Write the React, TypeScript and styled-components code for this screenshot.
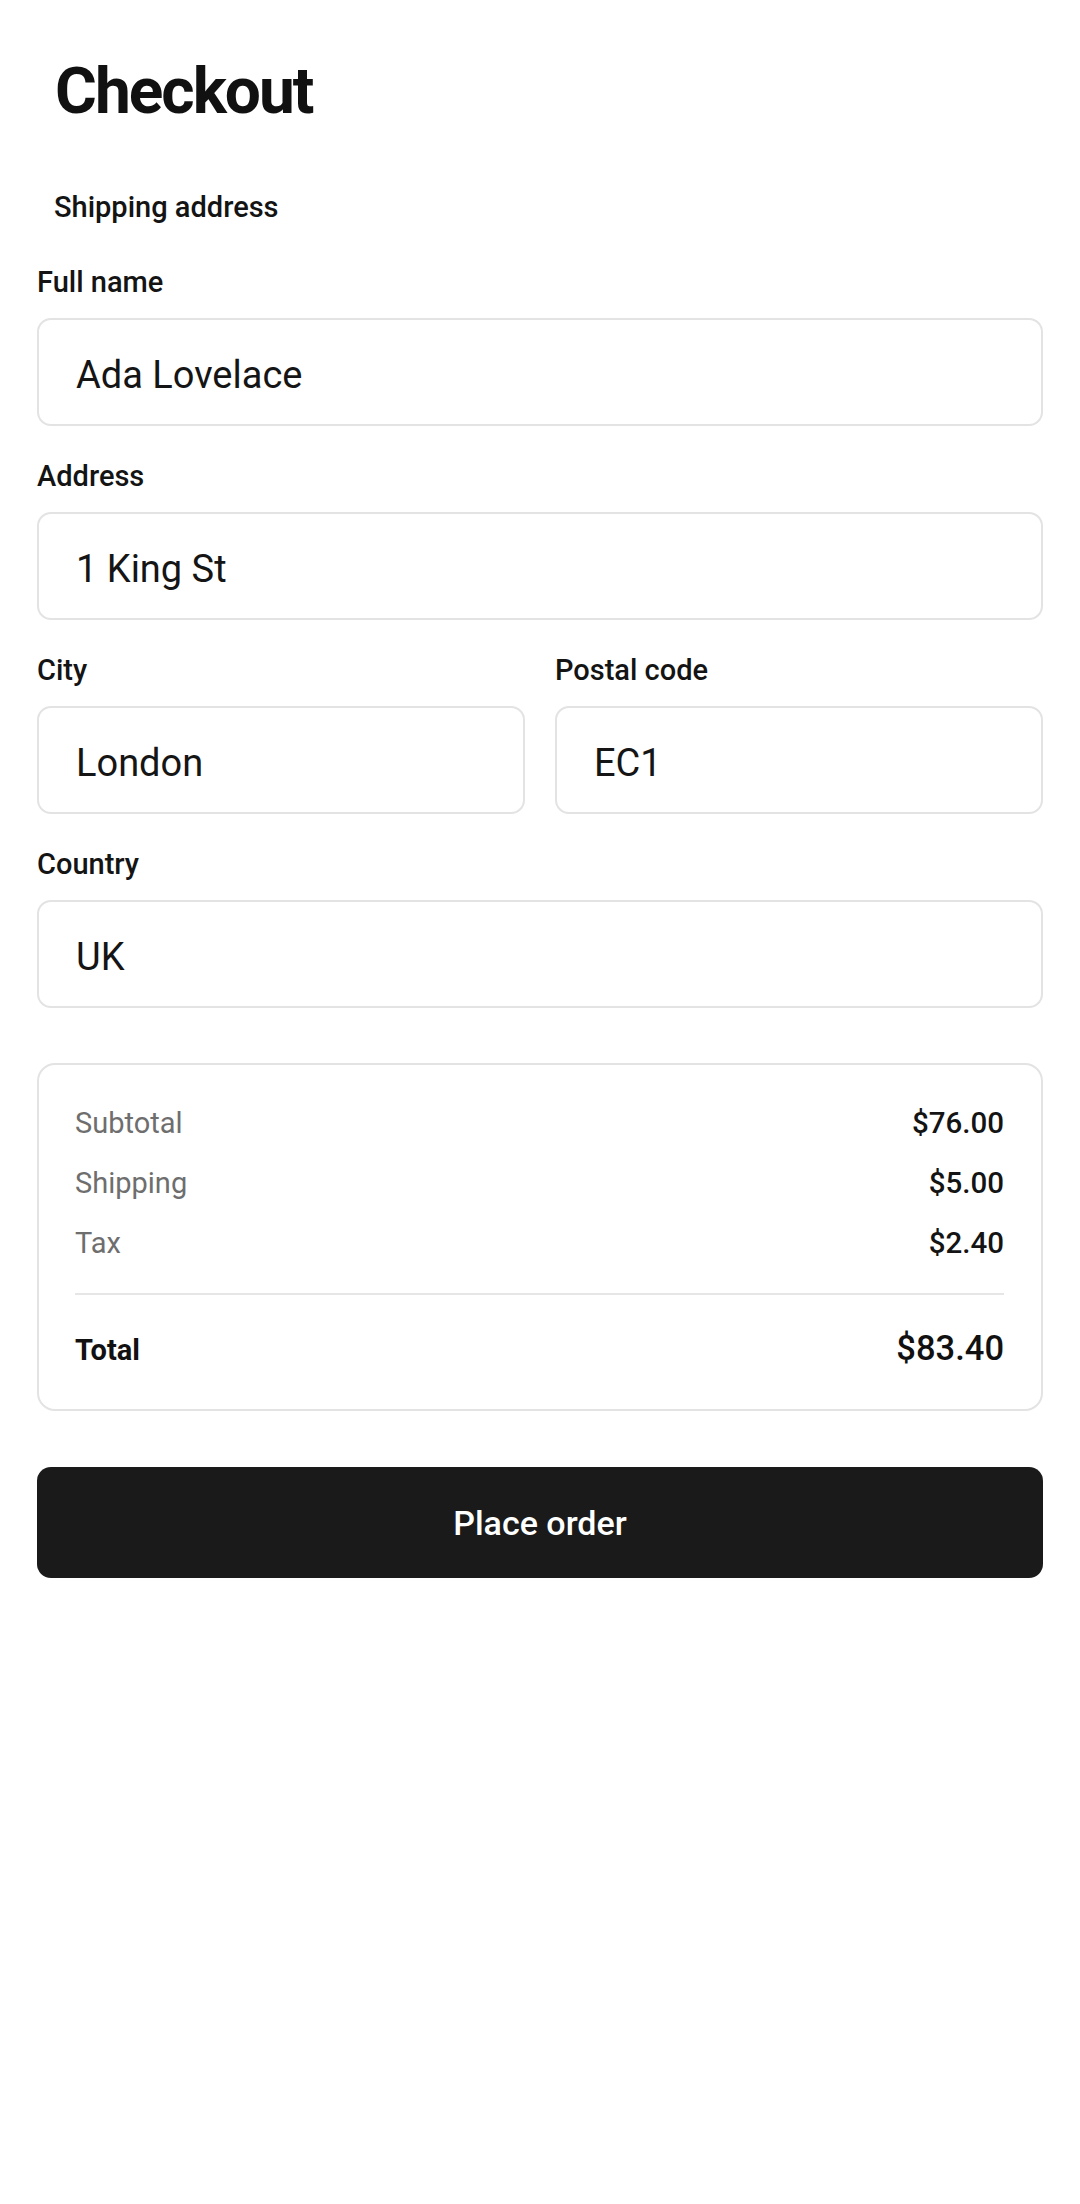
import React from "react";
import styled, { createGlobalStyle } from "styled-components";

const GlobalStyle = createGlobalStyle`
  html, body {
    margin: 0;
    padding: 0;
    background: #ffffff;
  }
  body {
    font-family: Roboto, "Noto Sans", "Liberation Sans", sans-serif;
    color: #111111;
    -webkit-font-smoothing: antialiased;
  }
  * { box-sizing: border-box; }
`;

const Page = styled.main`
  width: 1080px;
  min-height: 2204px;
  padding: 52px 37px 0 37px;
  display: flex;
  flex-direction: column;
  background: #ffffff;
`;

const Title = styled.h1`
  margin: 0 0 0 18px;
  font-size: 64px;
  line-height: 80px;
  font-weight: 700;
  letter-spacing: -2px;
  color: #111111;
`;

const SectionTitle = styled.h2`
  margin: 58px 0 40px 17px;
  font-size: 29px;
  line-height: 34px;
  font-weight: 500;
  color: #141414;
`;

const Form = styled.form`
  display: flex;
  flex-direction: column;
  gap: 32px;
`;

const Row = styled.div`
  display: grid;
  grid-template-columns: 1fr 1fr;
  gap: 30px;
`;

const Field = styled.label`
  display: flex;
  flex-direction: column;
  gap: 18px;
`;

const LabelText = styled.span`
  font-size: 29px;
  line-height: 36px;
  font-weight: 500;
  color: #141414;
`;

const Input = styled.input`
  height: 108px;
  width: 100%;
  padding: 5px 37px 0 37px;
  border: 2px solid #e3e3e3;
  border-radius: 14px;
  background: #ffffff;
  font-family: Roboto, "Noto Sans", "Liberation Sans", sans-serif;
  font-size: 38px;
  font-weight: 400;
  color: #151515;
  outline: none;
`;

const Summary = styled.section`
  margin-top: 55px;
  border: 2px solid #e3e3e3;
  border-radius: 18px;
  padding: 38px 37px 39px 36px;
  display: flex;
  flex-direction: column;
`;

const Lines = styled.div`
  display: flex;
  flex-direction: column;
  gap: 20px;
`;

const Line = styled.div`
  display: flex;
  justify-content: space-between;
  align-items: baseline;
  height: 40px;
  line-height: 40px;
`;

const LineLabel = styled.span`
  font-size: 29px;
  font-weight: 400;
  color: #6e6e6e;
`;

const LineValue = styled.span`
  font-size: 29.5px;
  font-weight: 500;
  color: #141414;
`;

const Divider = styled.hr`
  margin: 30px 0 31px 0;
  border: none;
  height: 2px;
  background: #e6e6e6;
`;

const TotalLine = styled.div`
  display: flex;
  justify-content: space-between;
  align-items: baseline;
  height: 44px;
  line-height: 44px;
`;

const TotalLabel = styled.span`
  font-size: 29px;
  font-weight: 700;
  color: #111111;
`;

const TotalValue = styled.span`
  font-size: 34.5px;
  font-weight: 500;
  color: #111111;
`;

const PlaceOrder = styled.button`
  margin-top: 56px;
  height: 111px;
  width: 100%;
  border: none;
  border-radius: 14px;
  background: #1a1a1a;
  color: #ffffff;
  font-family: Roboto, "Noto Sans", "Liberation Sans", sans-serif;
  font-size: 34px;
  font-weight: 500;
  cursor: pointer;
`;

type FieldProps = { label: string; value: string };

const TextField: React.FC<FieldProps> = ({ label, value }) => (
  <Field>
    <LabelText>{label}</LabelText>
    <Input defaultValue={value} />
  </Field>
);

const lines = [
  { label: "Subtotal", value: "$76.00" },
  { label: "Shipping", value: "$5.00" },
  { label: "Tax", value: "$2.40" },
];

export default function App() {
  return (
    <>
      <GlobalStyle />
      <Page>
        <Title>Checkout</Title>
        <SectionTitle>Shipping address</SectionTitle>
        <Form onSubmit={(e) => e.preventDefault()}>
          <TextField label="Full name" value="Ada Lovelace" />
          <TextField label="Address" value="1 King St" />
          <Row>
            <TextField label="City" value="London" />
            <TextField label="Postal code" value="EC1" />
          </Row>
          <TextField label="Country" value="UK" />
        </Form>
        <Summary>
          <Lines>
            {lines.map((l) => (
              <Line key={l.label}>
                <LineLabel>{l.label}</LineLabel>
                <LineValue>{l.value}</LineValue>
              </Line>
            ))}
          </Lines>
          <Divider />
          <TotalLine>
            <TotalLabel>Total</TotalLabel>
            <TotalValue>$83.40</TotalValue>
          </TotalLine>
        </Summary>
        <PlaceOrder type="button">Place order</PlaceOrder>
      </Page>
    </>
  );
}
